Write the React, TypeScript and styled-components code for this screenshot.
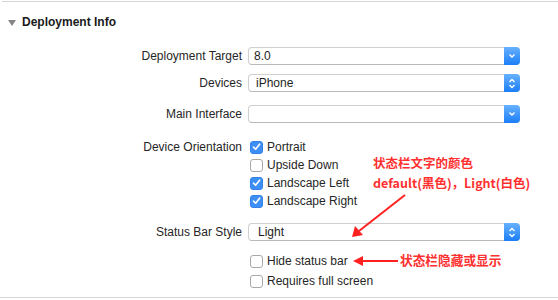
import styled, { createGlobalStyle } from "styled-components";

const GlobalStyle = createGlobalStyle`
  body {
    margin: 0;
    background: #ffffff;
    font-family: "Liberation Sans", Arial, sans-serif;
  }
`;

// Whole settings pane
const Pane = styled.div`
  position: relative;
  width: 558px;
  height: 300px;
  padding-top: 1px;
  box-sizing: border-box;
  overflow: hidden;
  background: #fff;
`;

const Rule = styled.div<{ $left?: number; $top?: number }>`
  height: 1px;
  margin-left: ${(p) => p.$left ?? 0}px;
  margin-top: ${(p) => p.$top ?? 0}px;
  background: #d6d6d6;
`;

const Header = styled.div`
  display: flex;
  align-items: center;
  gap: 6px;
  height: 38px;
  margin-top: 1px;
  padding-left: 8px;
  box-sizing: border-box;
`;

const Disclosure = styled.span`
  width: 0;
  height: 0;
  border-left: 4.5px solid transparent;
  border-right: 4.5px solid transparent;
  border-top: 6px solid #858585;
  margin-top: 1px;
`;

const Title = styled.div`
  font-size: 12px;
  font-weight: bold;
  color: #1a1a1a;
`;

const Form = styled.div`
  display: flex;
  flex-direction: column;
`;

const Row = styled.div<{ $top: number }>`
  display: grid;
  grid-template-columns: 242px 272px;
  column-gap: 6px;
  margin-top: ${(p) => p.$top}px;
  align-items: start;
`;

const Label = styled.div`
  height: 18px;
  line-height: 18px;
  text-align: right;
  font-size: 12px;
  color: #262626;
  white-space: nowrap;
`;

// Popup / combo field
const Field = styled.div<{ $inset: number }>`
  position: relative;
  display: flex;
  align-items: center;
  height: 18px;
  box-sizing: border-box;
  padding-left: ${(p) => p.$inset}px;
  border: 1px solid #cfcfcf;
  border-bottom-color: #b9b9b9;
  border-radius: 4px;
  background: #fff;
  font-size: 12px;
  color: #1e1e1e;
`;

const FieldButton = styled.div`
  position: absolute;
  top: -1px;
  right: -1px;
  bottom: -1px;
  width: 16px;
  display: flex;
  align-items: center;
  justify-content: center;
  border-radius: 0 4px 4px 0;
  background: linear-gradient(#67b1ff, #1b7ef8);
`;

const Checks = styled.div<{ $gap?: number }>`
  display: flex;
  flex-direction: column;
  gap: ${(p) => p.$gap ?? 0}px;
`;

const CheckRow = styled.div`
  display: flex;
  align-items: center;
  gap: 4px;
  height: 18px;
  padding-left: 2px;
  font-size: 12px;
  color: #262626;
`;

const Box = styled.span<{ $on: boolean }>`
  width: 13px;
  height: 13px;
  box-sizing: border-box;
  border-radius: 3px;
  display: flex;
  align-items: center;
  justify-content: center;
  background: ${(p) => (p.$on ? "#3d8ef5" : "#fff")};
  border: 1px solid ${(p) => (p.$on ? "#3282ea" : "#a9a9a9")};
`;

const Arrows = styled.svg`
  position: absolute;
  left: 0;
  top: 0;
`;

const Note = styled.div<{ $x: number; $y: number; $size: number }>`
  position: absolute;
  left: ${(p) => p.$x}px;
  top: ${(p) => p.$y}px;
  font-family: "Noto Sans CJK SC", "Liberation Sans", sans-serif;
  font-size: ${(p) => p.$size}px;
  font-weight: bold;
  line-height: 18px;
  color: #ff3030;
  white-space: nowrap;
`;

const Chevron = ({ double }: { double?: boolean }) =>
  double ? (
    <svg width="8" height="11" viewBox="0 0 8 11">
      <path d="M1.5 4 L4 1.5 L6.5 4 M1.5 7 L4 9.5 L6.5 7" fill="none" stroke="#fff" strokeWidth="1.4" />
    </svg>
  ) : (
    <svg width="8" height="6" viewBox="0 0 8 6">
      <path d="M1.5 1.5 L4 4 L6.5 1.5" fill="none" stroke="#fff" strokeWidth="1.4" />
    </svg>
  );

const Tick = () => (
  <svg width="9" height="8" viewBox="0 0 9 8">
    <path d="M1.5 4.2 L3.6 6.2 L7.6 1.2" fill="none" stroke="#fff" strokeWidth="1.6" strokeLinecap="round" strokeLinejoin="round" />
  </svg>
);

const Check = ({ on, children }: { on: boolean; children: string }) => (
  <CheckRow>
    <Box $on={on}>{on && <Tick />}</Box>
    {children}
  </CheckRow>
);

const orientations = [
  { name: "Portrait", on: true },
  { name: "Upside Down", on: false },
  { name: "Landscape Left", on: true },
  { name: "Landscape Right", on: true },
];

export default function App() {
  return (
    <Pane>
      <GlobalStyle />
      <Rule $left={2} />
      <Header>
        <Disclosure />
        <Title>Deployment Info</Title>
      </Header>
      <Form>
        <Row $top={6}>
          <Label>Deployment Target</Label>
          <Field $inset={5}>
            8.0
            <FieldButton>
              <Chevron />
            </FieldButton>
          </Field>
        </Row>
        <Row $top={9}>
          <Label>Devices</Label>
          <Field $inset={7}>
            iPhone
            <FieldButton>
              <Chevron double />
            </FieldButton>
          </Field>
        </Row>
        <Row $top={13}>
          <Label>Main Interface</Label>
          <Field $inset={5}>
            <FieldButton>
              <Chevron />
            </FieldButton>
          </Field>
        </Row>
        <Row $top={15}>
          <Label>Device Orientation</Label>
          <Checks>
            {orientations.map((o) => (
              <Check key={o.name} on={o.on}>
                {o.name}
              </Check>
            ))}
          </Checks>
        </Row>
        <Row $top={13}>
          <Label>Status Bar Style</Label>
          <Field $inset={9}>
            Light
            <FieldButton>
              <Chevron double />
            </FieldButton>
          </Field>
        </Row>
        <Row $top={11}>
          <span />
          <Checks $gap={2}>
            <Check on={false}>Hide status bar</Check>
            <Check on={false}>Requires full screen</Check>
          </Checks>
        </Row>
      </Form>
      <Rule $top={7} />

      <Arrows width="558" height="300" viewBox="0 0 558 300">
        <g stroke="#ff2020" strokeWidth="2" fill="#ff2020">
          <line x1="405" y1="195" x2="359" y2="231" />
          <polygon points="352,237 355,226 363,235" stroke="none" />
          <line x1="398" y1="261" x2="361" y2="261" />
          <polygon points="353,261 363,256 363,266" stroke="none" />
        </g>
      </Arrows>
      <Note $x={373} $y={154} $size={12.5}>状态栏文字的颜色</Note>
      <Note $x={373} $y={174} $size={12.5}>default(黑色)，Light(白色)</Note>
      <Note $x={400} $y={251} $size={12.7}>状态栏隐藏或显示</Note>
    </Pane>
  );
}
